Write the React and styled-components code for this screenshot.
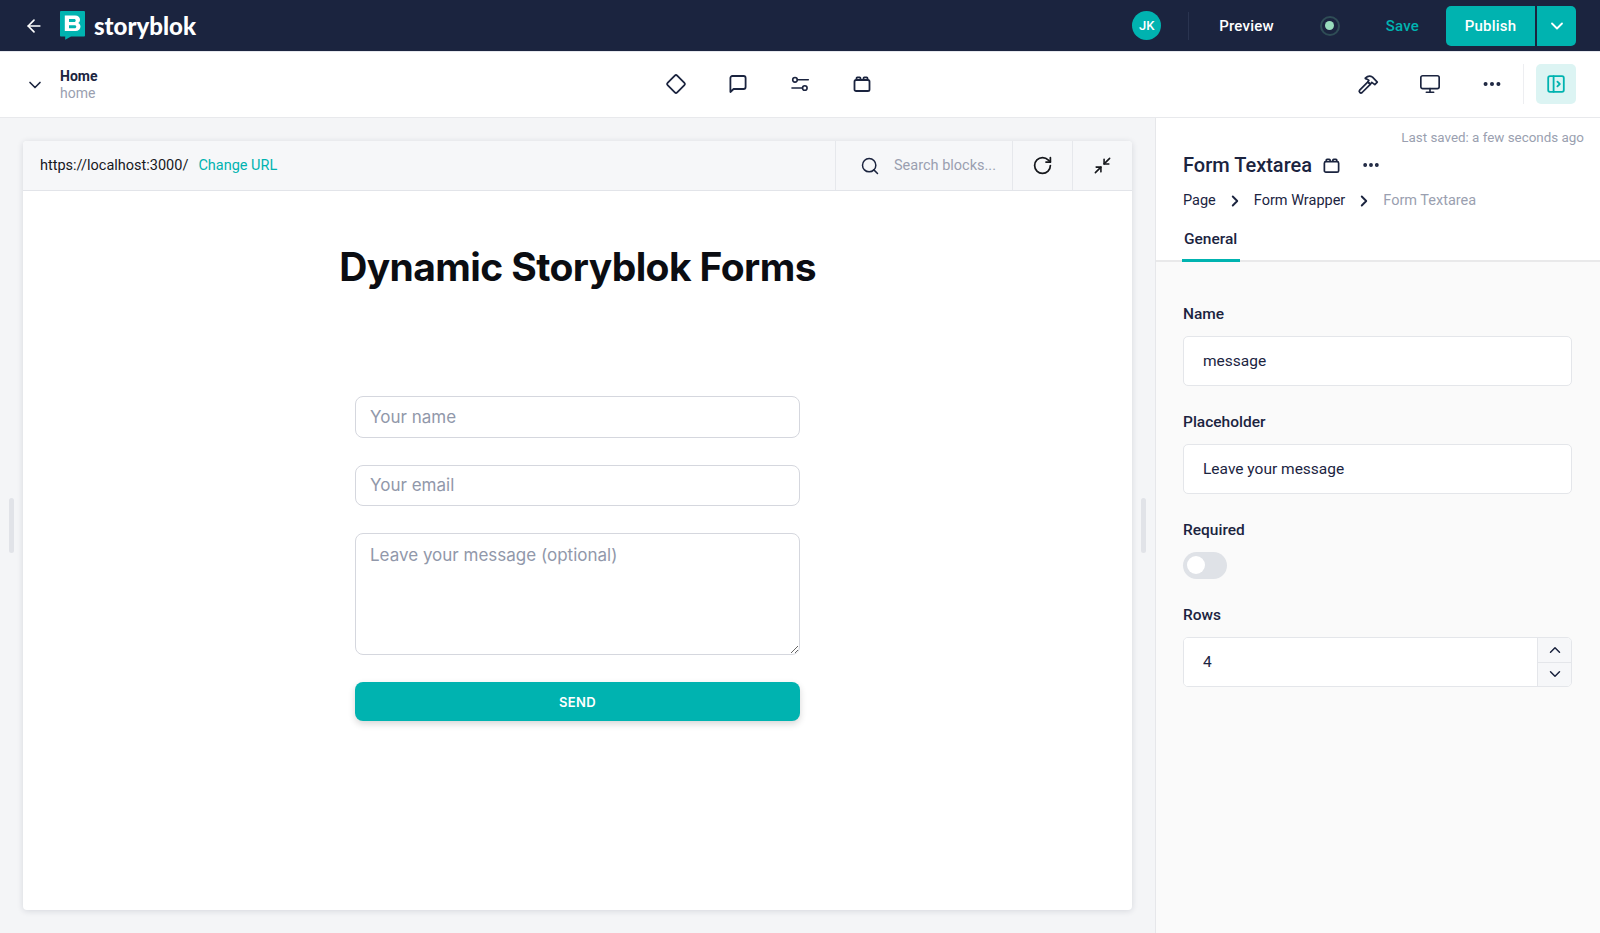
import React from "react";
import styled, { createGlobalStyle } from "styled-components";
import { ArrowLeft, ChevronDown, ChevronRight, ChevronUp, Ellipsis, Minimize2, Monitor, RotateCw, Search } from "lucide-react";

const NAVY = "#1b243f";
const TEAL = "#00b3b0";

const GlobalStyle = createGlobalStyle`
  * { box-sizing: border-box; }
  html, body { margin: 0; padding: 0; height: 100%; }
  body {
    font-family: Roboto, "Liberation Sans", sans-serif;
    color: ${NAVY};
    background: #f4f5f7;
    overflow: hidden;
  }
`;

function BlockIcon({ size = 20 }) {
  return (
    <svg width={size} height={size} viewBox="0 0 20 20" fill="none" stroke="currentColor" strokeWidth="1.8" strokeLinejoin="round">
      <rect x="2.5" y="6" width="15" height="11" rx="1.6" />
      <path d="M4.5 6V4.2c0-.5.3-.8.8-.8h2.4c.5 0 .8.3.8.8V6M11.5 6V4.2c0-.5.3-.8.8-.8h2.400c.5 0 .8.3.8.8V6" />
    </svg>
  );
}

function DiamondIcon() {
  return (
    <svg width="22" height="22" viewBox="0 0 22 22" fill="none" stroke="currentColor" strokeWidth="1.8" strokeLinejoin="round">
      <path d="M9.8 2.6a1.7 1.7 0 0 1 2.4 0l7.2 7.2a1.7 1.7 0 0 1 0 2.4l-7.2 7.2a1.7 1.7 0 0 1-2.4 0l-7.2-7.2a1.7 1.7 0 0 1 0-2.4z" />
    </svg>
  );
}

function ChatIcon() {
  return (
    <svg width="20" height="20" viewBox="0 0 20 20" fill="none" stroke="currentColor" strokeWidth="1.8" strokeLinejoin="round">
      <path d="M2.400 18V4a2 2 0 0 1 2-2h11.200a2 2 0 0 1 2 2v9a2 2 0 0 1-2 2H5.600z" />
    </svg>
  );
}

function SlidersIcon() {
  return (
    <svg width="20" height="20" viewBox="0 0 20 20" fill="none" stroke="currentColor" strokeWidth="1.6" strokeLinecap="round">
      <circle cx="5" cy="5.800" r="2.300" />
      <path d="M7.300 5.800h11" />
      <circle cx="14.800" cy="14" r="2.300" />
      <path d="M2 14h10.500" />
    </svg>
  );
}

function HammerIcon() {
  return (
    <svg width="22" height="22" viewBox="0 0 22 22" fill="none" stroke="currentColor" strokeWidth="1.7" strokeLinejoin="round">
      <path d="M2.700 17.100 10.900 8.900l2.400 2.400-8.200 8.200a1.700 1.700 0 0 1-2.400-2.400z" />
      <path d="M8.300 5.100C10.500 3 13.500 2.700 15.500 4.100l4.800 5-2.500 2.500-3-2.200-1.500 1.900-2.400-2.400 1-1.600c-1-.9-2.300-1.500-3.600-1.700z" />
    </svg>
  );
}

function PanelIcon() {
  return (
    <svg width="18" height="18" viewBox="0 0 18 18" fill="none" stroke={TEAL} strokeWidth="1.8" strokeLinecap="round" strokeLinejoin="round">
      <rect x="1.200" y="1.200" width="15.600" height="15.600" rx="1.800" />
      <path d="M6.600 1.200v15.600M10.400 6.600 12.800 9l-2.400 2.400" />
    </svg>
  );
}

function Logo() {
  return (
    <svg width="25" height="29" viewBox="0 0 25 29">
      <path d="M1.200 0h22.600c.7 0 1.200.5 1.200 1.200v23.200c0 .7-.5 1.200-1.200 1.200H11L5.200 28.800v-3.200h-4C.5 25.600 0 25.100 0 24.400V1.200C0 .5.500 0 1.200 0z" fill={TEAL} />
      <path fillRule="evenodd" d="M4.800 4.600h10.400c3 0 4.800 1.700 4.800 4.100 0 1.500-.7 2.600-1.900 3.200 1.500.6 2.400 1.900 2.400 3.600 0 2.700-2 4.500-5 4.500H4.800zm4.200 3.400v3h5.200c1 0 1.500-.6 1.500-1.500S15.200 8 14.200 8zm0 6.200v3h5.600c1.100 0 1.700-.6 1.700-1.500s-.6-1.500-1.700-1.500z" fill="#fff" />
    </svg>
  );
}

export default function App() {
  return (
    <Page>
      <GlobalStyle />
      <TopBar>
        <BackButton><ArrowLeft size={20} strokeWidth={2} /></BackButton>
        <Brand>
          <Logo />
          <Wordmark>storyblok</Wordmark>
        </Brand>
        <TopActions>
          <Avatar>JK</Avatar>
          <TopDivider />
          <PreviewLabel>Preview</PreviewLabel>
          <StatusRing><StatusDot /></StatusRing>
          <SaveLabel>Save</SaveLabel>
          <PublishGroup>
            <PublishButton>Publish</PublishButton>
            <PublishCaret><ChevronDown size={20} strokeWidth={2.2} /></PublishCaret>
          </PublishGroup>
        </TopActions>
      </TopBar>

      <SubBar>
        <StoryInfo>
          <StoryCaret><ChevronDown size={20} strokeWidth={2} /></StoryCaret>
          <div>
            <StoryName>Home</StoryName>
            <StorySlug>home</StorySlug>
          </div>
        </StoryInfo>
        <CenterTools>
          <ToolButton><DiamondIcon /></ToolButton>
          <ToolButton><ChatIcon /></ToolButton>
          <ToolButton><SlidersIcon /></ToolButton>
          <ToolButton><BlockIcon /></ToolButton>
        </CenterTools>
        <RightTools>
          <ToolButton><HammerIcon /></ToolButton>
          <ToolButton><Monitor size={22} strokeWidth={1.8} /></ToolButton>
          <ToolButton><Ellipsis size={22} strokeWidth={2.4} /></ToolButton>
          <ToolDivider />
          <PanelToggle><PanelIcon /></PanelToggle>
        </RightTools>
      </SubBar>

      <Workspace>
        <Gutter><Grip /></Gutter>
        <PreviewCard>
          <UrlBar>
            <UrlSection>
              <UrlText>https://localhost:3000/</UrlText>
              <ChangeUrl>Change URL</ChangeUrl>
            </UrlSection>
            <SearchSection>
              <Search size={20} strokeWidth={1.8} color={NAVY} />
              <SearchLabel>Search blocks...</SearchLabel>
            </SearchSection>
            <BarButton><RotateCw size={21} strokeWidth={2} /></BarButton>
            <BarButton><Minimize2 size={19} strokeWidth={2} /></BarButton>
          </UrlBar>
          <PreviewBody>
            <Heading>Dynamic Storyblok Forms</Heading>
            <ContactForm>
              <FormInput placeholder="Your name" />
              <FormInput placeholder="Your email" />
              <FormTextarea placeholder="Leave your message (optional)" />
              <SendButton type="button">SEND</SendButton>
            </ContactForm>
          </PreviewBody>
        </PreviewCard>
        <Gutter><Grip /></Gutter>

        <Panel>
          <PanelHead>
            <LastSaved>Last saved: a few seconds ago</LastSaved>
            <TitleRow>
              <PanelTitle>Form Textarea</PanelTitle>
              <BlockIcon size={19} />
              <TitleMenu><Ellipsis size={20} strokeWidth={2.6} /></TitleMenu>
            </TitleRow>
            <Crumbs>
              <span>Page</span>
              <ChevronRight size={18} strokeWidth={2.5} />
              <span>Form Wrapper</span>
              <ChevronRight size={18} strokeWidth={2.5} />
              <CrumbCurrent>Form Textarea</CrumbCurrent>
            </Crumbs>
            <Tabs>
              <Tab>General</Tab>
            </Tabs>
          </PanelHead>
          <Fields>
            <Field>
              <FieldLabel>Name</FieldLabel>
              <FieldInput readOnly value="message" />
            </Field>
            <Field>
              <FieldLabel>Placeholder</FieldLabel>
              <FieldInput readOnly value="Leave your message" />
            </Field>
            <Field>
              <FieldLabel>Required</FieldLabel>
              <Switch><SwitchKnob /></Switch>
            </Field>
            <Field>
              <FieldLabel>Rows</FieldLabel>
              <NumberBox>
                <NumberValue readOnly value="4" />
                <Stepper>
                  <StepButton><ChevronUp size={18} strokeWidth={2} /></StepButton>
                  <StepButton><ChevronDown size={18} strokeWidth={2} /></StepButton>
                </Stepper>
              </NumberBox>
            </Field>
          </Fields>
        </Panel>
      </Workspace>
    </Page>
  );
}

const Page = styled.div`
  display: flex;
  flex-direction: column;
  height: 933px;
  overflow: hidden;
`;

const TopBar = styled.header`
  flex: 0 0 51px;
  display: flex;
  align-items: center;
  padding: 0 24px 0 24px;
  background: ${NAVY};
  color: #fff;
`;

const BackButton = styled.div`
  display: flex;
  width: 20px;
  color: #fff;
`;

const Brand = styled.div`
  display: flex;
  align-items: center;
  gap: 9px;
  margin-left: 16px;
`;

const Wordmark = styled.span`
  font-family: Lato, sans-serif;
  font-size: 24px;
  font-weight: 900;
  line-height: 1;
`;

const TopActions = styled.div`
  display: flex;
  align-items: center;
  margin-left: auto;
`;

const Avatar = styled.div`
  width: 29px;
  height: 29px;
  border-radius: 50%;
  display: flex;
  align-items: center;
  justify-content: center;
  background: ${TEAL};
  font-size: 13px;
  font-weight: 500;
`;

const TopDivider = styled.div`
  width: 1px;
  height: 28px;
  margin-left: 27px;
  background: #2a3450;
`;

const PreviewLabel = styled.span`
  margin-left: 30px;
  font-size: 15px;
  font-weight: 500;
  letter-spacing: 0.2px;
`;

const StatusRing = styled.div`
  width: 20px;
  height: 20px;
  margin-left: 46px;
  border-radius: 50%;
  display: flex;
  align-items: center;
  justify-content: center;
  background: ${NAVY};
  border: 2px solid #2f4d56;
`;

const StatusDot = styled.div`
  width: 9px;
  height: 9px;
  border-radius: 50%;
  background: #98dcbc;
`;

const SaveLabel = styled.span`
  margin-left: 46px;
  color: ${TEAL};
  font-size: 15px;
  font-weight: 500;
  letter-spacing: 0.2px;
`;

const PublishGroup = styled.div`
  display: flex;
  height: 40px;
  margin-left: 27px;
  border-radius: 5px;
  overflow: hidden;
  background: ${TEAL};
`;

const PublishButton = styled.div`
  width: 91px;
  display: flex;
  align-items: center;
  justify-content: center;
  border-right: 2px solid ${NAVY};
  font-size: 15px;
  font-weight: 500;
  letter-spacing: 0.2px;
`;

const PublishCaret = styled.div`
  width: 39px;
  display: flex;
  align-items: center;
  justify-content: center;
`;

const SubBar = styled.div`
  flex: 0 0 67px;
  display: grid;
  grid-template-columns: 645px 248px 1fr;
  align-items: center;
  background: #fff;
  border-top: 1px solid #e6e8ee;
  border-bottom: 1px solid #e8e9ec;
  padding-right: 24px;
`;

const StoryInfo = styled.div`
  display: flex;
  align-items: center;
  gap: 15px;
  padding-left: 25px;
`;

const StoryCaret = styled.div`
  display: flex;
  width: 20px;
`;

const StoryName = styled.div`
  font-size: 14px;
  font-weight: 700;
  line-height: 16px;
`;

const StorySlug = styled.div`
  color: #9a9fb0;
  font-size: 14px;
  line-height: 18px;
`;

const CenterTools = styled.div`
  display: flex;
  padding-bottom: 2px;
`;

const ToolButton = styled.div`
  width: 62px;
  display: flex;
  align-items: center;
  justify-content: center;
  color: ${NAVY};
`;

const RightTools = styled.div`
  display: flex;
  align-items: center;
  justify-content: flex-end;
  padding-bottom: 1px;
`;

const ToolDivider = styled.div`
  width: 1px;
  height: 40px;
  margin: 0 12px 0 0;
  background: #edeef1;
`;

const PanelToggle = styled.div`
  width: 40px;
  height: 40px;
  border-radius: 5px;
  display: flex;
  align-items: center;
  justify-content: center;
  background: #dcf4f3;
`;

const Workspace = styled.main`
  flex: 1;
  min-height: 0;
  display: flex;
`;

const Gutter = styled.div`
  flex: 0 0 23px;
  display: flex;
  align-items: center;
  justify-content: center;
`;

const Grip = styled.div`
  width: 5px;
  height: 55px;
  border-radius: 3px;
  background: #e1e3e8;
`;

const PreviewCard = styled.section`
  flex: 0 0 1109px;
  display: flex;
  flex-direction: column;
  margin: 23px 0;
  background: #fff;
  border-radius: 4px;
  overflow: hidden;
  box-shadow: 0 1px 6px rgba(27, 36, 63, 0.14);
`;

const UrlBar = styled.div`
  flex: 0 0 50px;
  display: flex;
  background: #f6f7f9;
  border-bottom: 1px solid #e2e4e9;
`;

const UrlSection = styled.div`
  flex: 1;
  display: flex;
  align-items: center;
  gap: 10px;
  padding-left: 17px;
  font-size: 14.5px;
`;

const UrlText = styled.span`
  color: #16181d;
`;

const ChangeUrl = styled.span`
  color: ${TEAL};
`;

const SearchSection = styled.div`
  flex: 0 0 177px;
  display: flex;
  align-items: center;
  gap: 14px;
  padding-left: 24px;
  border-left: 1px solid #e6e8ec;
`;

const SearchLabel = styled.span`
  color: #9a9fb0;
  font-size: 14.5px;
`;

const BarButton = styled.div`
  flex: 0 0 60px;
  display: flex;
  align-items: center;
  justify-content: center;
  color: #16181d;
  border-left: 1px solid #e6e8ec;
`;

const PreviewBody = styled.div`
  flex: 1;
  display: flex;
  flex-direction: column;
  align-items: center;
  font-family: Inter, sans-serif;
`;

const Heading = styled.h1`
  margin: 50px 0 0;
  color: #0b0d12;
  font-size: 39px;
  font-weight: 700;
  line-height: 52px;
  letter-spacing: -0.6px;
`;

const ContactForm = styled.form`
  width: 445px;
  display: flex;
  flex-direction: column;
  gap: 27px;
  margin-top: 103px;
`;

const FormInput = styled.input`
  width: 100%;
  height: 41.500px;
  padding: 0 14px;
  border: 1px solid #d5d7de;
  border-radius: 8px;
  background: #fff;
  font-family: Inter, sans-serif;
  font-size: 17px;
  &::placeholder { color: #9198aa; opacity: 1; }
`;

const FormTextarea = styled.textarea`
  display: block;
  width: 100%;
  height: 122px;
  padding: 11px 14px;
  border: 1px solid #d5d7de;
  border-radius: 8px;
  background: #fff;
  font-family: Inter, sans-serif;
  font-size: 17px;
  line-height: 20px;
  &::placeholder { color: #9198aa; opacity: 1; }
`;

const SendButton = styled.button`
  height: 39px;
  border: 0;
  border-radius: 8px;
  background: ${TEAL};
  color: #fff;
  font-family: Inter, sans-serif;
  font-size: 13px;
  font-weight: 600;
  letter-spacing: 0.3px;
  box-shadow: 0 3px 7px rgba(0, 0, 0, 0.16);
`;

const Panel = styled.aside`
  flex: 1;
  min-width: 0;
  display: flex;
  flex-direction: column;
  background: #fafafa;
  border-left: 1px solid #e6e7ea;
`;

const PanelHead = styled.div`
  background: #fff;
  border-bottom: 2px solid #e9e9ea;
  padding: 12px 16px 0 27px;
`;

const LastSaved = styled.div`
  color: #9a9fb0;
  font-size: 13.4px;
  line-height: 16px;
  text-align: right;
`;

const TitleRow = styled.div`
  display: flex;
  align-items: center;
  gap: 10px;
  margin-top: 6px;
  height: 26px;
`;

const PanelTitle = styled.div`
  font-size: 20px;
  font-weight: 500;
`;

const TitleMenu = styled.div`
  display: flex;
  margin-left: 10px;
`;

const Crumbs = styled.div`
  display: flex;
  align-items: center;
  gap: 10px;
  margin-top: 13px;
  font-size: 14.5px;
  line-height: 20px;
`;

const CrumbCurrent = styled.span`
  color: #9a9fb0;
`;

const Tabs = styled.div`
  display: flex;
  margin-top: 18px;
  margin-bottom: -2px;
`;

const Tab = styled.div`
  padding: 0 2px 10px;
  margin-left: -1px;
  width: 58px;
  border-bottom: 3px solid ${TEAL};
  font-size: 15.5px;
  font-weight: 500;
  line-height: 20px;
`;

const Fields = styled.div`
  display: flex;
  flex-direction: column;
  gap: 27px;
  padding: 43px 28px 0 27px;
`;

const Field = styled.div`
  display: flex;
  flex-direction: column;
  gap: 13px;
`;

const FieldLabel = styled.label`
  font-size: 15.5px;
  font-weight: 500;
  line-height: 18px;
`;

const FieldInput = styled.input`
  width: 100%;
  height: 50px;
  padding: 0 19px;
  border: 1px solid #e4e6ea;
  border-radius: 5px;
  background: #fff;
  color: ${NAVY};
  font-family: Roboto, sans-serif;
  font-size: 15.5px;
  outline: none;
`;

const Switch = styled.div`
  width: 44px;
  height: 27px;
  padding: 4px;
  border-radius: 14px;
  background: #dfe2e7;
`;

const SwitchKnob = styled.div`
  width: 18px;
  height: 18px;
  border-radius: 50%;
  background: #fff;
`;

const NumberBox = styled.div`
  display: flex;
  height: 50px;
  border: 1px solid #e4e6ea;
  border-radius: 5px;
  overflow: hidden;
  background: #fff;
`;

const NumberValue = styled.input`
  flex: 1;
  min-width: 0;
  padding: 0 19px;
  border: 0;
  color: ${NAVY};
  font-family: Roboto, sans-serif;
  font-size: 15.5px;
  outline: none;
`;

const Stepper = styled.div`
  flex: 0 0 34px;
  display: flex;
  flex-direction: column;
  background: #f6f7f9;
  border-left: 1px solid #e4e6ea;
`;

const StepButton = styled.div`
  flex: 1;
  display: flex;
  align-items: center;
  justify-content: center;
  &:first-child { border-bottom: 1px solid #e4e6ea; }
`;
